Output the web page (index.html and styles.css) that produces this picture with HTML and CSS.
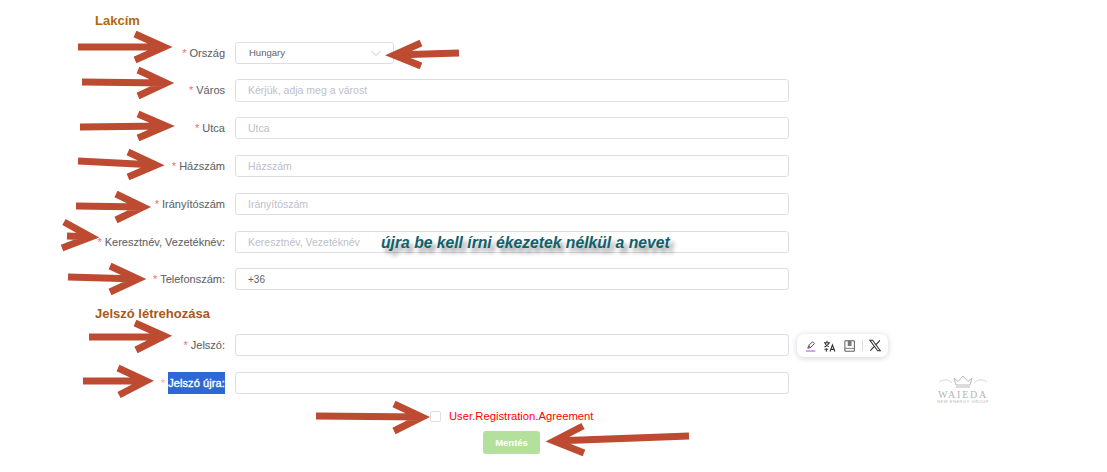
FILE: index.html
```html
<!DOCTYPE html>
<html lang="hu">
<head>
<meta charset="utf-8">
<title>Regisztráció</title>
<link rel="stylesheet" href="styles.css">
</head>
<body>
<main class="page">
  <form class="form">
    <h2 class="section-title first">Lakcím</h2>
    <div class="rows">
      <div class="row">
        <label class="label"><span class="req">*</span> Ország</label>
        <div class="select"><span>Hungary</span>
          <svg class="chevron" width="12" height="12" viewBox="0 0 12 12"><path d="M1.5 4l4.5 4.6L10.500 4" fill="none" stroke="#c0c4cc" stroke-width="1"/></svg>
        </div>
      </div>
      <div class="row"><label class="label"><span class="req">*</span> Város</label><input class="input" placeholder="Kérjük, adja meg a várost"></div>
      <div class="row"><label class="label"><span class="req">*</span> Utca</label><input class="input" placeholder="Utca"></div>
      <div class="row"><label class="label"><span class="req">*</span> Házszám</label><input class="input" placeholder="Házszám"></div>
      <div class="row"><label class="label"><span class="req">*</span> Irányítószám</label><input class="input" placeholder="Irányítószám"></div>
      <div class="row"><label class="label"><span class="req">*</span> Keresztnév, Vezetéknév:</label><input class="input" placeholder="Keresztnév, Vezetéknév"></div>
      <div class="row"><label class="label"><span class="req">*</span> Telefonszám:</label><input class="input input-value" value="+36"></div>
    </div>
    <h2 class="section-title second">Jelszó létrehozása</h2>
    <div class="rows">
      <div class="row"><label class="label"><span class="req">*</span> Jelszó:</label><input class="input" type="password"></div>
      <div class="row"><label class="label"><span class="req req-light">*</span> <span class="selected">Jelszó újra:</span></label><input class="input" type="password"></div>
    </div>
    <div class="agreement"><span class="checkbox"></span><span class="agreement-text">User.Registration.Agreement</span></div>
    <div class="actions"><button class="save" type="button">Mentés</button></div>
  </form>

  <p class="note">újra be kell írni ékezetek nélkül a nevet</p>

  <div class="toolbar">
    <svg width="14" height="14" viewBox="0 0 14 14"><path d="M4 9.500l1-3 4-4 2 2-4 4z M5 6.500l2 2" fill="none" stroke="#444" stroke-width="1"/><path d="M2 12.300h10" stroke="#b67cf0" stroke-width="1.400"/></svg>
    <svg width="14" height="14" viewBox="0 0 14 14"><path d="M1 3.500h6.500M4.200 1.500V3.500M2 3.500c.5 2.200 2 3.600 4 4.300M6.400 3.500C5.900 5.500 4 7 1.500 8M3.500 9.500v3.500M1.500 10.500H5.500" fill="none" stroke="#333" stroke-width="1.100"/><path d="M7.500 12.800l2.500-7 2.500 7M8.400 10.600h3.200" fill="none" stroke="#333" stroke-width="1.200"/></svg>
    <svg width="14" height="14" viewBox="0 0 14 14"><path d="M2 1.500h10v11H2z" fill="none" stroke="#555" stroke-width="1"/><path d="M5 1.500h4V7H5z" fill="#777"/><path d="M2 9.500h10" stroke="#777" stroke-width="1"/></svg>
    <span class="tool-sep"></span>
    <svg width="13" height="13" viewBox="0 0 13 13"><path d="M1 1h2.800l8.200 11H9.200z" fill="none" stroke="#333" stroke-width="1.100"/><path d="M11.500 1L7.200 5.800M5.600 7.500L1.500 12" fill="none" stroke="#333" stroke-width="1.200"/></svg>
  </div>

  <div class="logo">
    <svg width="52" height="17" viewBox="0 0 52 17"><path d="M19 12l-2-7 4 3.500L26 3l5 5.500L35 5l-2 7z M19 14h14" fill="none" stroke="#b9b9b9" stroke-width="1"/><path d="M2 9c4-3 9-3 13 1M50 9c-4-3-9-3-13 1" fill="none" stroke="#d6d6d6" stroke-width="1"/></svg>
    <div class="logo-name">WAIEDA</div>
    <div class="logo-sub">NEW ENERGY GROUP</div>
  </div>

  <svg class="arrows" width="1107" height="472" viewBox="0 0 1107 472" aria-hidden="true">
    <g class="arrow">
      <path d="M78 47H164M135 34L164 47L135 60"/>
      <path d="M459 53L394 55M421 43L394 55L421 66"/>
      <path d="M82 82L166 83M138 70L166 83L138 96"/>
      <path d="M80 127L166 126M138 114L166 126L138 138"/>
      <path d="M78 161L156 165M128 152L156 165L128 177"/>
      <path d="M76 206L143 207M116 194L143 207L116 220"/>
      <path d="M67 236L91 237M64 222L91 237L62 248"/>
      <path d="M68 277L138 279M110 266L138 279L110 292"/>
      <path d="M89 337H164M135 323L164 336L136 350"/>
      <path d="M83 381H146M118 368L146 381L119 395"/>
      <path d="M316 416L422 417M394 404L422 417L394 431"/>
      <path d="M689 436L554 441M583 426L554 441L584 453"/>
    </g>
  </svg>
</main>
</body>
</html>
```
FILE: styles.css
```css
* { box-sizing: border-box; }
html, body { margin: 0; padding: 0; background: #fff; }
body { font-family: "Liberation Sans", Arial, sans-serif; }
.page { position: relative; width: 1107px; height: 472px; overflow: hidden; }
.form { width: 789px; padding-top: 13px; }
.section-title { margin: 0 0 0 95px; font-size: 13px; line-height: 16px; font-weight: 700; color: #b5650f; }
.section-title.second { margin-top: 15.6px; margin-bottom: 12px; color: #a9571a; }
.section-title.first { margin-bottom: 12.6px; }
.rows { display: flex; flex-direction: column; gap: 15.6px; }
.row { display: flex; align-items: center; gap: 10px; height: 22.2px; }
.label { width: 225px; flex: none; text-align: right; font-size: 11px; color: #606266; white-space: nowrap; -webkit-text-stroke: .08px #606266; }
.req { color: #f56c6c; -webkit-text-stroke: 0; }
.req-light { color: #f9a5a5; }
.selected { background: #2f67d4; color: #fff; display: inline-block; line-height: 22px; -webkit-text-stroke: .35px #fff; letter-spacing: .1px; }
.input { flex: 1; min-width: 0; height: 100%; padding: 0 12px; border: 1px solid #dcdfe6; border-radius: 3px; font: 10.500px "Liberation Sans", Arial, sans-serif; color: #606266; background: #fff; outline: none; }
.input::placeholder { color: #bcc0c8; }
.input-value { font-size: 10px; }
.select { width: 159px; height: 100%; padding: 0 11px 0 13px; border: 1px solid #dcdfe6; border-radius: 3px; display: flex; align-items: center; justify-content: space-between; font-size: 9.500px; color: #606266; }
.agreement { display: flex; align-items: center; gap: 8px; margin: 16px 0 0 430px; height: 12px; }
.checkbox { width: 11px; height: 11px; border: 1px solid #dcdfe6; border-radius: 2px; background: #fff; }
.agreement-text { font-size: 11.250px; color: #f00; white-space: nowrap; }
.actions { margin: 9px 0 0 483px; }
.save { display: block; width: 57px; height: 23px; padding: 0; border: 0; border-radius: 3px; background: #b3e19d; color: #fff; font: 700 9.500px "Liberation Sans", Arial, sans-serif; }
.note { position: absolute; left: 381px; top: 234px; margin: 0; font-size: 15.700px; line-height: 18px; font-style: italic; font-weight: 700; color: #12606b; text-shadow: 4px 5px 4px rgba(0,0,0,.4); white-space: nowrap; }
.toolbar { position: absolute; left: 797px; top: 334px; width: 91px; height: 23px; padding: 0 7px; display: flex; align-items: center; gap: 6px; background: #fff; border-radius: 7px; box-shadow: 0 1px 6px rgba(0,0,0,.18); }
.tool-sep { width: 1px; height: 11px; background: #ddd; }
.logo { position: absolute; left: 936px; top: 373px; width: 54px; text-align: center; color: #b5b5b5; }
.logo svg { display: block; margin: 0 auto; }
.logo-name { font: 10px/9px "Liberation Serif", serif; letter-spacing: 1.800px; white-space: nowrap; }
.logo-sub { font-size: 4px; line-height: 5px; letter-spacing: .55px; white-space: nowrap; }
.arrows { position: absolute; left: 0; top: 0; pointer-events: none; }
.arrow path { fill: none; stroke: #bc4b32; stroke-width: 7; stroke-linejoin: miter; stroke-miterlimit: 10; }
```
